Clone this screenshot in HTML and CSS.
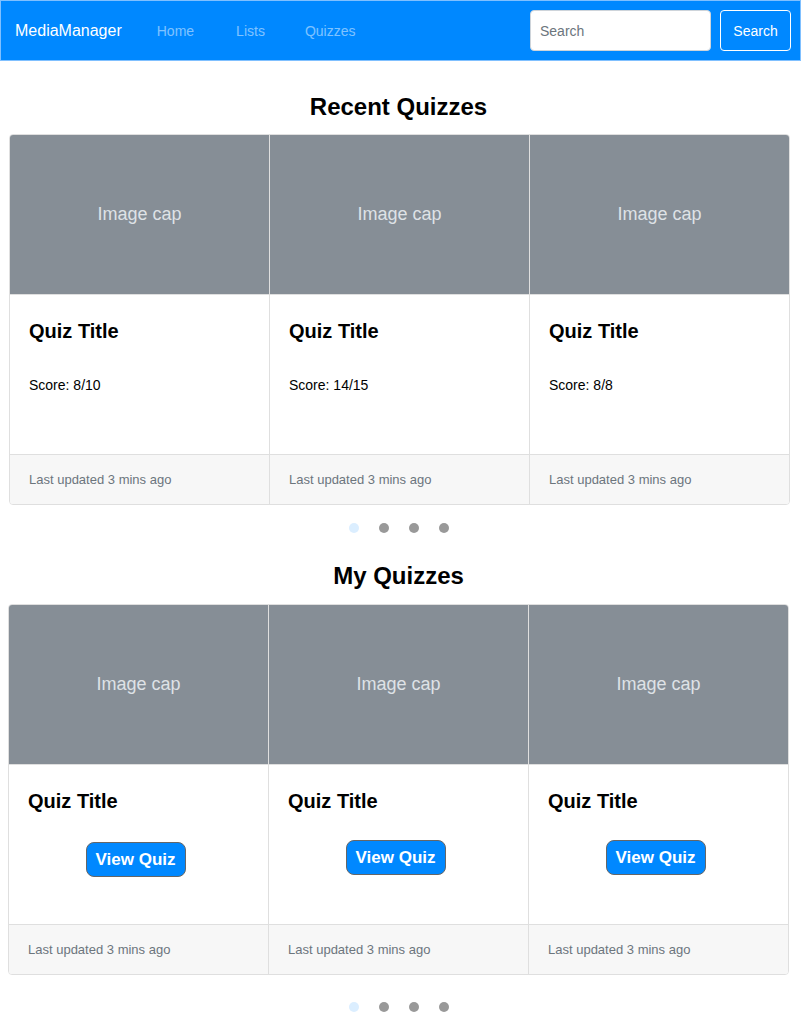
FILE: index.html
```html
<!DOCTYPE html>
<html>
<head>
<meta charset="utf-8">
<link rel="stylesheet" href="styles.css">
</head>
<body>
<nav class="navbar">
  <a class="brand">MediaManager</a>
  <ul class="nav-links">
    <li>Home</li>
    <li>Lists</li>
    <li>Quizzes</li>
  </ul>
  <form class="search">
    <input class="search-input" type="text" placeholder="Search">
    <button class="search-btn" type="button">Search</button>
  </form>
</nav>

<section class="section first">
  <h2 class="section-title">Recent Quizzes</h2>
  <div class="card-group shift">
    <div class="card">
      <div class="card-img">Image cap</div>
      <div class="card-body">
        <h5 class="card-title">Quiz Title</h5>
        <p class="card-text">Score: 8/10</p>
      </div>
      <div class="card-footer">Last updated 3 mins ago</div>
    </div>
    <div class="card">
      <div class="card-img">Image cap</div>
      <div class="card-body">
        <h5 class="card-title">Quiz Title</h5>
        <p class="card-text">Score: 14/15</p>
      </div>
      <div class="card-footer">Last updated 3 mins ago</div>
    </div>
    <div class="card">
      <div class="card-img">Image cap</div>
      <div class="card-body">
        <h5 class="card-title">Quiz Title</h5>
        <p class="card-text">Score: 8/8</p>
      </div>
      <div class="card-footer">Last updated 3 mins ago</div>
    </div>
  </div>
  <div class="dots"><span class="dot active"></span><span class="dot"></span><span class="dot"></span><span class="dot"></span></div>
</section>

<section class="section second">
  <h2 class="section-title">My Quizzes</h2>
  <div class="card-group">
    <div class="card">
      <div class="card-img">Image cap</div>
      <div class="card-body">
        <h5 class="card-title">Quiz Title</h5>
        <div class="btn-row low"><button class="view-btn" type="button">View Quiz</button></div>
      </div>
      <div class="card-footer">Last updated 3 mins ago</div>
    </div>
    <div class="card">
      <div class="card-img">Image cap</div>
      <div class="card-body">
        <h5 class="card-title">Quiz Title</h5>
        <div class="btn-row"><button class="view-btn" type="button">View Quiz</button></div>
      </div>
      <div class="card-footer">Last updated 3 mins ago</div>
    </div>
    <div class="card">
      <div class="card-img">Image cap</div>
      <div class="card-body">
        <h5 class="card-title">Quiz Title</h5>
        <div class="btn-row"><button class="view-btn" type="button">View Quiz</button></div>
      </div>
      <div class="card-footer">Last updated 3 mins ago</div>
    </div>
  </div>
  <div class="dots"><span class="dot active"></span><span class="dot"></span><span class="dot"></span><span class="dot"></span></div>
</section>
</body>
</html>
```

FILE: styles.css
```css
* { box-sizing: border-box; }
html, body { margin: 0; padding: 0; }
body {
  font-family: "Liberation Sans", Arial, sans-serif;
  color: #000;
  background: #fff;
  width: 801px;
}
.navbar {
  height: 61px;
  background: #0088ff;
  border: 1px solid #80c0ff;
  display: flex;
  align-items: center;
  padding: 0 9px 0 14px;
}
.brand {
  color: #fff;
  font-size: 16px;
  margin-right: 35px;
}
.nav-links {
  list-style: none;
  margin: 0;
  padding: 0;
  display: flex;
  gap: 0;
  flex: 1;
}
.nav-links li {
  color: rgba(255,255,255,0.5);
  font-size: 14px;
  margin-right: 42px;
}
.nav-links li:nth-child(2) { margin-right: 40px; }
.search { display: flex; align-items: center; gap: 9px; }
.search-input {
  width: 181px;
  height: 41px;
  border: 1px solid #ced4da;
  border-radius: 4px;
  padding: 0 9px;
  font-family: "Liberation Sans", Arial, sans-serif;
  font-size: 14px;
  color: #495057;
}
.search-input::placeholder { color: #6c757d; }
.search-btn {
  width: 71px;
  height: 41px;
  background: transparent;
  color: #fff;
  border: 1px solid #fff;
  border-radius: 4px;
  font-family: "Liberation Sans", Arial, sans-serif;
  font-size: 14px;
  padding: 0;
}
.section { padding: 0 12px 0 8px; }
.section-title {
  margin: 0;
  text-align: center;
  font-size: 24px;
  font-weight: bold;
  line-height: 29px;
}
.first .section-title { margin-top: 31px; margin-bottom: 13px; }
.second .section-title { margin-top: 28px; margin-bottom: 14px; }
.card-group {
  display: flex;
  width: 781px;
  border: 1px solid #dfdfdf;
  border-radius: 4px;
  overflow: hidden;
}
.card-group.shift { margin-left: 1px; }
.card {
  flex: 1;
  display: flex;
  flex-direction: column;
  border-left: 1px solid #dfdfdf;
}
.card:first-child { border-left: none; }
.card-img {
  height: 160px;
  background: #868e96;
  color: #dee2e6;
  font-size: 18px;
  display: flex;
  align-items: center;
  justify-content: center;
  border-bottom: 1px solid #dfdfdf;
}
.card-body {
  height: 159px;
  padding: 24px 19px 20px 19px;
}
.card-title {
  margin: 0;
  font-size: 20px;
  font-weight: bold;
  line-height: 24px;
}
.card-text {
  margin: 34px 0 0 0;
  font-size: 14px;
  line-height: 17px;
}
.btn-row {
  display: flex;
  justify-content: center;
  padding-right: 6px;
  margin-top: 27px;
}
.btn-row.low { margin-top: 29px; }
.view-btn {
  width: 100px;
  height: 35px;
  background: #0088ff;
  color: #fff;
  border: 1px solid #666;
  border-radius: 8px;
  font-family: "Liberation Sans", Arial, sans-serif;
  font-weight: bold;
  font-size: 17px;
  padding: 0;
}
.card-footer {
  height: 50px;
  background: #f7f7f7;
  border-top: 1px solid #dfdfdf;
  color: #6c757d;
  font-size: 13px;
  display: flex;
  align-items: center;
  padding: 0 19px;
}
.dots {
  display: flex;
  justify-content: center;
  gap: 20px;
}
.first .dots { margin-top: 18px; }
.second .dots { margin-top: 27px; }
.dot {
  width: 10px;
  height: 10px;
  border-radius: 50%;
  background: #999;
}
.dot.active { background: #dbeeff; }
```
